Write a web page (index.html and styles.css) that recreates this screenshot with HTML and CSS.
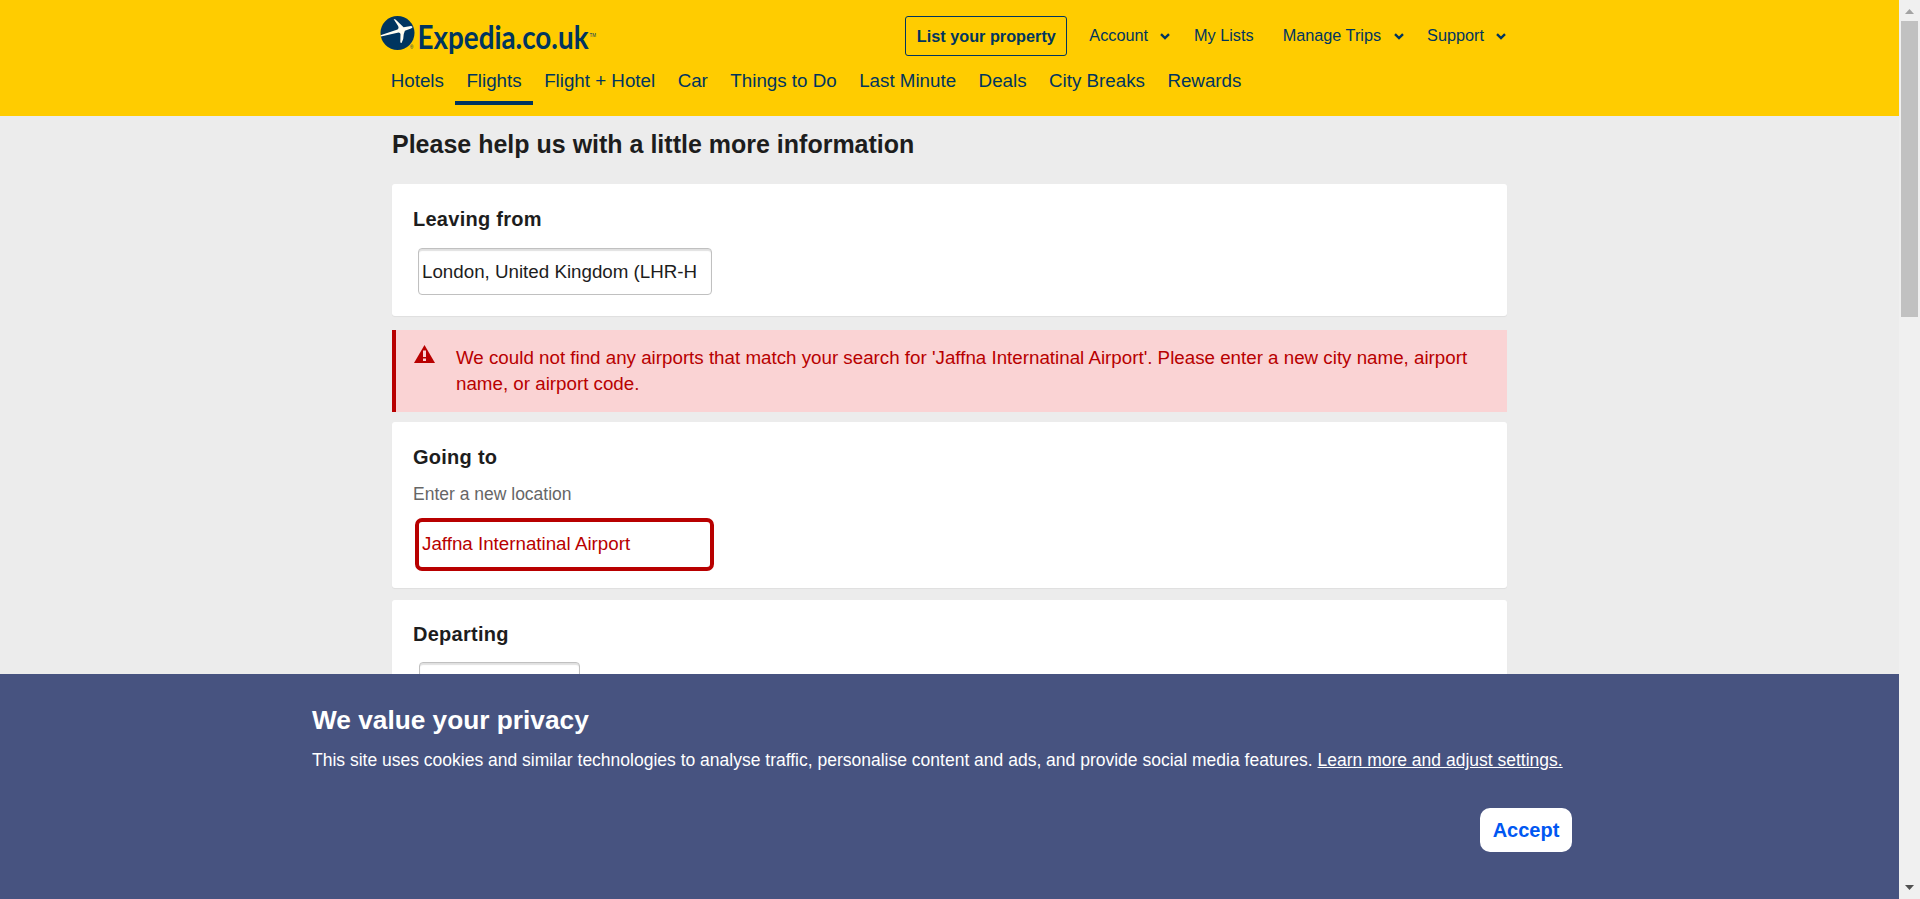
FILE: index.html
```html
<!DOCTYPE html>
<html lang="en-GB">
<head>
<meta charset="utf-8">
<title>Flights | Expedia.co.uk</title>
<link rel="stylesheet" href="styles.css">
</head>
<body>
<div class="page">
  <header class="header">
    <div class="top">
      <a class="logo">
        <svg width="220" height="50" viewBox="0 0 220 50">
          <circle cx="17.5" cy="21" r="17" fill="#00355f"/>
          <path d="M.5 23.3 L17.5 17.4 Q19.4 16.2 17.8 13.5 L13.6 7 L15.5 7.6 L23.6 15.2 L31 13.9 Q34 14.6 31 16.4 L24.9 18.8 Q23.4 21.5 23.2 27 L21.6 31 L20.3 30.4 L20.5 22 Q20.3 20.5 18.6 20.5 L1 24.4Z" fill="#fffdf0"/>
          <text class="logo-mark" x="30" y="37">®</text>
          <text class="logo-word" x="37.5" y="37" textLength="171" lengthAdjust="spacingAndGlyphs">Expedia.co.uk</text>
          <text class="logo-mark" x="209.5" y="25">TM</text>
        </svg>
      </a>
      <nav class="tools">
        <a class="list-btn">List your property</a>
        <a class="tool account">Account <svg class="chev" width="10" height="7" viewBox="0 0 10 7"><path d="M1 1.2L5 5L9 1.2"/></svg></a>
        <a class="tool lists">My Lists</a>
        <a class="tool trips">Manage Trips <svg class="chev" width="10" height="7" viewBox="0 0 10 7"><path d="M1 1.2L5 5L9 1.2"/></svg></a>
        <a class="tool">Support <svg class="chev" width="10" height="7" viewBox="0 0 10 7"><path d="M1 1.2L5 5L9 1.2"/></svg></a>
      </nav>
    </div>
    <nav class="tabs">
      <a>Hotels</a><a class="active">Flights</a><a>Flight + Hotel</a><a>Car</a><a>Things to Do</a><a>Last Minute</a><a>Deals</a><a>City Breaks</a><a>Rewards</a>
    </nav>
  </header>
  <main class="main">
    <h1>Please help us with a little more information</h1>
    <section class="card leaving">
      <h2>Leaving from</h2>
      <div class="field">London, United Kingdom (LHR-H</div>
    </section>
    <div class="alert">
      <svg width="21" height="18" viewBox="0 0 21 18"><path d="M10.5 0L21 18H0Z" fill="#b80000"/><path d="M9 5.5h3v6.5H9zM9 13.6h3v2.4H9z" fill="#fad3d4"/></svg>
      <p>We could not find any airports that match your search for 'Jaffna Internatinal Airport'. Please enter a new city name, airport name, or airport code.</p>
    </div>
    <section class="card going">
      <h2>Going to</h2>
      <p class="hint">Enter a new location</p>
      <div class="field error">Jaffna Internatinal Airport</div>
    </section>
    <section class="card departing">
      <h2>Departing</h2>
      <div class="field date"></div>
    </section>
  </main>
  <aside class="privacy">
    <h3>We value your privacy</h3>
    <p>This site uses cookies and similar technologies to analyse traffic, personalise content and ads, and provide social media features. <a>Learn more and adjust settings.</a></p>
    <button>Accept</button>
  </aside>
</div>
<div class="scrollbar">
  <svg width="9" height="5" viewBox="0 0 9 5"><path d="M4.5 0L9 5H0Z" fill="#a3a3a3"/></svg>
  <div class="thumb"></div>
  <svg class="down" width="9" height="5" viewBox="0 0 9 5"><path d="M0 0H9L4.5 5Z" fill="#505050"/></svg>
</div>
</body>
</html>
```
FILE: styles.css
```css
* { box-sizing: border-box; }
body {
  margin: 0;
  height: 899px;
  overflow: hidden;
  display: flex;
  background: #ececec;
  color: #1d1d1d;
  font-family: "Liberation Sans", Arial, sans-serif;
}
h1, h2, h3, p { margin: 0; }
.page { position: relative; width: 1899px; height: 899px; overflow: hidden; }

.header { height: 116px; background: #fc0; color: #00355f; padding: 12px 392px 0 379.5px; }
.top { display: flex; justify-content: space-between; height: 46px; }
.logo { width: 220px; height: 46px; }
.logo svg { display: block; overflow: visible; }
.logo-word { font: bold 32px Lato, sans-serif; fill: #00355f; }
.logo-mark { font: 4.5px "Liberation Sans", sans-serif; fill: #00355f; }
.tools { display: flex; align-items: flex-start; font-size: 16.25px; white-space: nowrap; }
.list-btn {
  width: 162px;
  height: 40px;
  margin: 4px 22px 0 0;
  border: 1px solid #00355f;
  border-radius: 3px;
  text-align: center;
  line-height: 39px;
  font-weight: bold;
}
.tool { display: flex; align-items: center; margin-top: 1px; height: 44px; line-height: 44px; }
.chev { margin: 2px 1px 0 12px; fill: none; stroke: #00355f; stroke-width: 2.4; }
.account { margin-right: 23px; }
.lists { margin-right: 29px; }
.trips { margin-right: 22px; }
.trips .chev { margin-left: 13px; }
.tabs { display: flex; font-size: 18.75px; white-space: nowrap; }
.tabs a { height: 47px; padding: 0 11.25px; line-height: 45px; }
.tabs .active { border-bottom: 4px solid #00355f; }

.main { width: 1115px; margin-left: 392px; }
h1 { height: 68px; line-height: 57px; font-size: 25px; }
.card { background: #fff; border-radius: 3px; box-shadow: 0 1px 1px rgba(0, 0, 0, .06); padding: 20px 21px; height: 166px; }
h2 { font-size: 20px; line-height: 30px; letter-spacing: .26px; }
.leaving { height: 132px; }
.going { margin-bottom: 12px; }
.departing { padding-top: 19px; }
.field {
  width: 294px;
  height: 47px;
  margin: 14px 0 0 5px;
  padding-left: 3px;
  border: 1px solid #c0c0c0;
  border-radius: 4px;
  box-shadow: inset 0 2px 1px rgba(0, 0, 0, .12);
  font-size: 18.75px;
  line-height: 45px;
  white-space: nowrap;
}
.hint { margin-top: 8px; font-size: 17.5px; line-height: 28px; color: #666; }
.error {
  width: 299px;
  height: 53px;
  margin: 10px 0 0 2px;
  border: 4px solid #b80000;
  border-radius: 7px;
  box-shadow: none;
  padding-left: 3px;
  line-height: 43px;
  color: #b80000;
}
.date { width: 161px; margin: 13px 0 0 6px; }
.alert {
  display: flex;
  gap: 21px;
  height: 82px;
  margin: 14px 0 10px;
  padding: 15px 38px 0 18px;
  border-left: 4px solid #b80000;
  background: #fad3d4;
  color: #b80000;
  font-size: 18.75px;
  line-height: 26px;
}
.alert svg { flex: none; }

/* cookie notice stays over the foot of the page */
.privacy {
  position: absolute;
  inset: 674px 0 0;
  padding: 30px 327px 0 312px;
  background: #475380;
  color: #fff;
  display: flex;
  flex-direction: column;
}
.privacy h3 { font-size: 26.25px; line-height: 32px; }
.privacy p { margin-top: 10px; font-size: 17.5px; line-height: 28px; white-space: nowrap; }
.privacy a { text-decoration: underline; }
.privacy button {
  align-self: flex-end;
  width: 92px;
  height: 44px;
  margin-top: 34px;
  padding: 0;
  border: 0;
  border-radius: 10px;
  background: #fff;
  color: #0057f2;
  font: bold 20px "Liberation Sans", Arial, sans-serif;
}

.scrollbar { width: 21px; padding: 9px 2px; display: flex; flex-direction: column; align-items: center; background: #f0f0f0; }
.thumb { width: 17px; height: 296px; margin-top: 7px; background: #c1c1c1; }
.down { margin-top: auto; }
```
